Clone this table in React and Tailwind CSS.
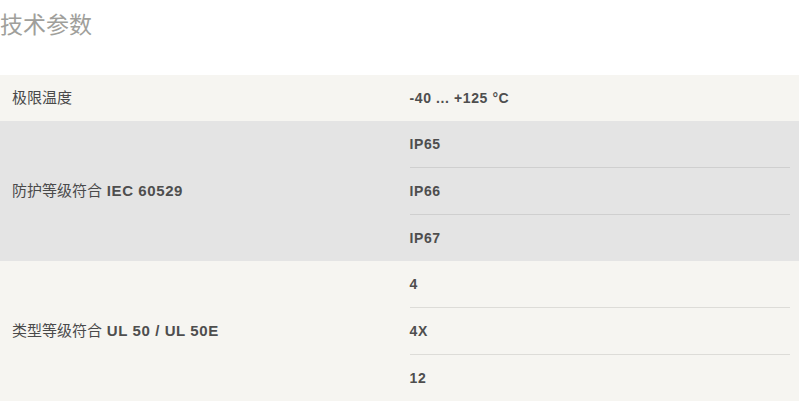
import React from 'react'

const rows = [
  { label: ['极限温度', ''], values: ['-40 ... +125 °C'], bg: 'bg-[#f6f5f1]', line: 'border-[#dddcd8]' },
  { label: ['防护等级符合', ' IEC 60529'], values: ['IP65', 'IP66', 'IP67'], bg: 'bg-[#e4e4e4]', line: 'border-[#cfcfcf]' },
  { label: ['类型等级符合', ' UL 50 / UL 50E'], values: ['4', '4X', '12'], bg: 'bg-[#f6f5f1]', line: 'border-[#dddcd8]' },
]

export default function App() {
  return (
    <div className="w-[799px] h-[403px] bg-white text-[#4a4a4a] font-['Liberation_Sans','Noto_Sans_CJK_SC',sans-serif]">
      {/* 标题 */}
      <h2 className="h-[75px] pt-[9px] text-[23px] leading-[32px] text-[#a09f9b] font-normal">技术参数</h2>

      {/* 参数表 */}
      <div className="flex flex-col">
        {rows.map((row, i) => (
          <div key={i} className={`grid grid-cols-2 ${row.bg}`}>
            <div className="flex items-center pl-3 text-[15px]">
              <span className="font-normal">{row.label[0]}</span>
              {row.label[1] && <span className="font-bold whitespace-pre tracking-[0.6px] text-[#4e4e4e]">{row.label[1]}</span>}
            </div>
            <div className="pl-[10px] pr-[9px]">
              {row.values.map((v, j) => (
                <div
                  key={j}
                  className={`flex items-center text-[14px] font-bold tracking-[0.6px] text-[#4e4e4e] ${j === 0 ? 'h-[46px]' : `h-[47px] border-t ${row.line}`}`}
                >
                  {v}
                </div>
              ))}
            </div>
          </div>
        ))}
      </div>
    </div>
  )
}
